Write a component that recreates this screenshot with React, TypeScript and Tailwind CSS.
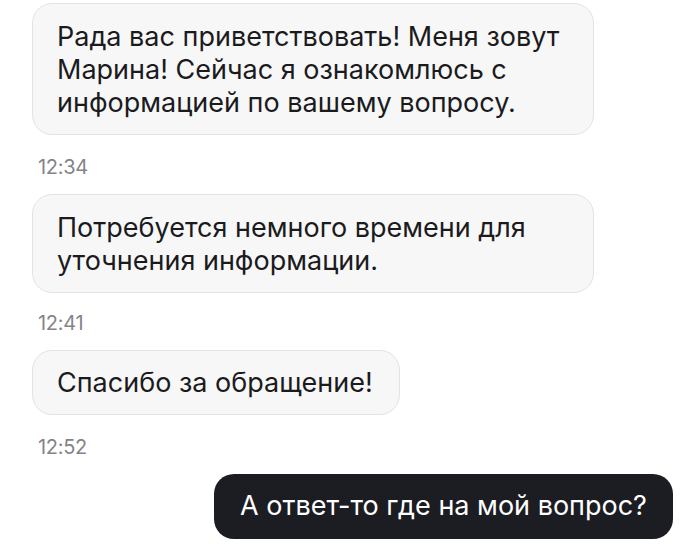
const font = { fontFamily: 'Inter, "Liberation Sans", Arial, sans-serif' };

const Bubble = ({ lines, className }: { lines: string[]; className: string }) => (
  <div
    className={`rounded-[20px] border border-[#e3e3e3] bg-[#f7f7f8] px-[24px] text-[27px] leading-[33px] text-[#1b1b1d] ${className}`}
  >
    {lines.map((l, i) => (
      <div key={i} className="whitespace-nowrap">
        {l}
      </div>
    ))}
  </div>
);

const Time = ({ t, className }: { t: string; className: string }) => (
  <div className={`ml-[38px] text-[20px] leading-[22px] tracking-[-0.3px] text-[#848488] ${className}`}>{t}</div>
);

export default function App() {
  return (
    <div className="w-[700px] h-[553px] overflow-hidden bg-white" style={font}>
      <div className="flex flex-col pt-[3px]">
        <Bubble
          className="ml-[32px] w-[562px] h-[132px] py-[16px]"
          lines={[
            'Рада вас приветствовать! Меня зовут',
            'Марина! Сейчас я ознакомлюсь с',
            'информацией по вашему вопросу.',
          ]}
        />
        <Time t="12:34" className="mt-[21px]" />
        <Bubble
          className="ml-[32px] mt-[16px] w-[562px] h-[99px] py-[16px]"
          lines={['Потребуется немного времени для', 'уточнения информации.']}
        />
        <Time t="12:41" className="mt-[19px]" />
        <Bubble
          className="ml-[32px] mt-[16px] w-[368px] h-[65px] py-[15px]"
          lines={['Спасибо за обращение!']}
        />
        <Time t="12:52" className="mt-[21px]" />
        <div className="flex justify-end pr-[27px] mt-[16px]">
          <div className="flex h-[65px] w-[459px] items-center justify-center rounded-[20px] bg-[#1c1d22] text-[27px] text-white">
            А ответ-то где на мой вопрос?
          </div>
        </div>
      </div>
    </div>
  );
}
